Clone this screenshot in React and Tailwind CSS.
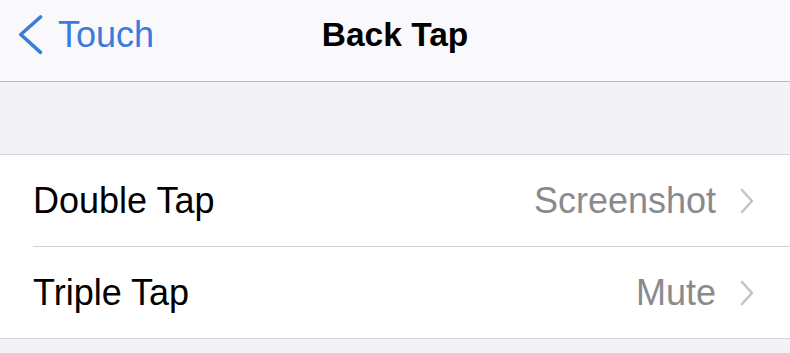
import React from 'react';

const font = { fontFamily: '"Liberation Sans", Arial, sans-serif' };

const rows = [
    { label: 'Double Tap', value: 'Screenshot' },
    { label: 'Triple Tap', value: 'Mute' },
];

const Chevron = () => (
    <svg width="14" height="26" viewBox="0 0 14 26" fill="none">
        <polyline points="2,2 12,13 2,24" stroke="#c4c4c7" strokeWidth="2.6" strokeLinecap="round" strokeLinejoin="round" />
    </svg>
);

export default function App() {
    return (
        <div className="w-[790px] h-[353px] overflow-hidden bg-[#f2f2f7] text-[36px] leading-[normal]" style={font}>
            <nav className="h-[82px] bg-[#f9f9fb] border-b border-[#b9b9bd] grid grid-cols-[1fr_auto_1fr] items-start">
                <div className="flex items-start pl-[17px] gap-[15px] text-[#3a7bdc]">
                    <svg width="26" height="40" viewBox="0 0 26 40" fill="none" className="mt-[15px]">
                        <polyline points="23.5,2 3.8,19.5 23.5,37.3" stroke="#3a7bdc" strokeWidth="3.6" strokeLinecap="round" strokeLinejoin="round" />
                    </svg>
                    <span className="pt-[14px]">Touch</span>
                </div>
                <h1 className="pt-[16px] font-bold text-[33.5px] text-black">Back Tap</h1>
                <div />
            </nav>

            <div className="h-[72px]" />

            <div className="bg-white border-t border-b border-[#d5d5d8]">
                {rows.map((row, i) => (
                    <div key={row.label}>
                        <div className="h-[91px] flex items-center justify-between pl-[33px] pr-[36px]">
                            <span className="text-black">{row.label}</span>
                            <div className="flex items-center gap-6">
                                <span className="text-[#8a8a8e]">{row.value}</span>
                                <Chevron />
                            </div>
                        </div>
                        {i < rows.length - 1 && <div className="ml-[33px] h-px bg-[#d0d0d3]" />}
                    </div>
                ))}
            </div>
        </div>
    );
}
